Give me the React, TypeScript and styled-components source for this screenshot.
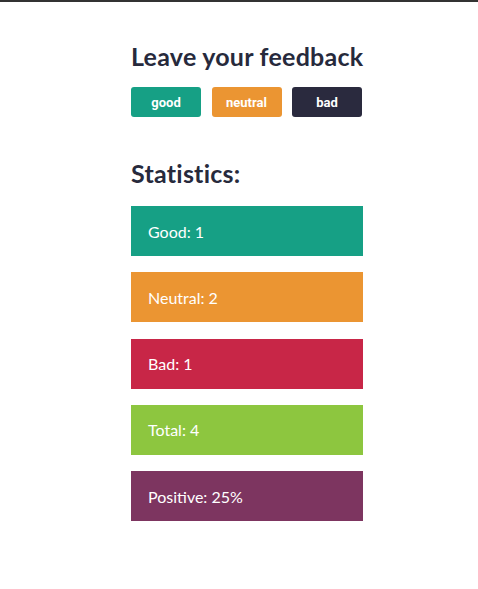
import React from 'react';
import styled, { createGlobalStyle } from 'styled-components';

const GlobalStyle = createGlobalStyle`
  html, body {
    margin: 0;
    padding: 0;
    background: #fff;
  }
  body {
    border-top: 2px solid #333333;
    font-family: 'Lato', 'Open Sans', sans-serif;
  }
`;

const Page = styled.main`
  width: 232px;
  margin: 0 auto;
  padding-top: 40px;
  padding-left: 16px;
`;

const Section = styled.section`
  margin-bottom: 20px;
`;

const Title = styled.h2<{ $top?: number; $bottom?: number }>`
  margin: ${(p) => p.$top ?? 0}px 0 ${(p) => p.$bottom ?? 17}px;
  font-family: 'Lato', sans-serif;
  font-size: 25px;
  font-weight: 700;
  letter-spacing: 0.25px;
  line-height: 28px;
  color: #272a3c;
  white-space: nowrap;
`;

const Buttons = styled.div`
  display: flex;
  gap: 10.5px;
`;

const Button = styled.button<{ $bg: string }>`
  width: 70px;
  height: 30px;
  border: none;
  border-radius: 3px;
  background: ${(p) => p.$bg};
  color: #fff;
  font-family: 'Roboto', sans-serif;
  font-size: 13px;
  font-weight: 700;
  cursor: pointer;
`;

const List = styled.ul`
  list-style: none;
  margin: 0;
  padding: 0;
  display: flex;
  flex-direction: column;
  gap: 16.3px;
`;

const Item = styled.li<{ $bg: string }>`
  height: 50px;
  display: flex;
  align-items: center;
  padding-left: 17px;
  background: ${(p) => p.$bg};
  color: #fff;
  font-size: 16px;
`;

const options = [
  { key: 'good', color: '#16a085' },
  { key: 'neutral', color: '#eb9532' },
  { key: 'bad', color: '#2a2a3e' },
];

export default function App() {
  const good = 1;
  const neutral = 2;
  const bad = 1;
  const total = good + neutral + bad;
  const positive = Math.round((good / total) * 100);

  const stats = [
    { label: 'Good', value: good, color: '#16a085' },
    { label: 'Neutral', value: neutral, color: '#eb9532' },
    { label: 'Bad', value: bad, color: '#c82647' },
    { label: 'Total', value: total, color: '#8dc63f' },
    { label: 'Positive', value: `${positive}%`, color: '#7d3560' },
  ];

  return (
    <>
      <GlobalStyle />
      <Page>
        <Section>
          <Title>Leave your feedback</Title>
          <Buttons>
            {options.map((o) => (
              <Button key={o.key} type="button" $bg={o.color}>
                {o.key}
              </Button>
            ))}
          </Buttons>
        </Section>
        <Section>
          <Title $top={42} $bottom={19}>
            Statistics:
          </Title>
          <List>
            {stats.map((s) => (
              <Item key={s.label} $bg={s.color}>
                {s.label}: {s.value}
              </Item>
            ))}
          </List>
        </Section>
      </Page>
    </>
  );
}
